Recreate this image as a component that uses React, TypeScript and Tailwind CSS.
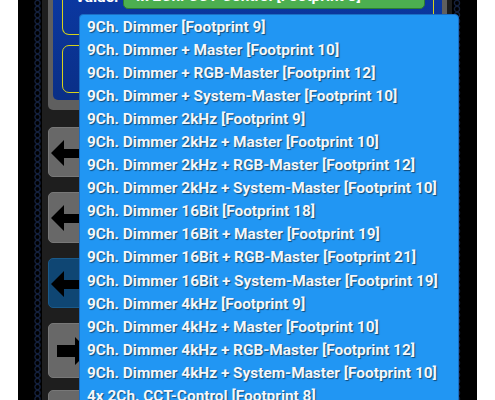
import React from "react";

const items = [
  "9Ch. Dimmer [Footprint 9]",
  "9Ch. Dimmer + Master [Footprint 10]",
  "9Ch. Dimmer + RGB-Master [Footprint 12]",
  "9Ch. Dimmer + System-Master [Footprint 10]",
  "9Ch. Dimmer 2kHz [Footprint 9]",
  "9Ch. Dimmer 2kHz + Master [Footprint 10]",
  "9Ch. Dimmer 2kHz + RGB-Master [Footprint 12]",
  "9Ch. Dimmer 2kHz + System-Master [Footprint 10]",
  "9Ch. Dimmer 16Bit [Footprint 18]",
  "9Ch. Dimmer 16Bit + Master [Footprint 19]",
  "9Ch. Dimmer 16Bit + RGB-Master [Footprint 21]",
  "9Ch. Dimmer 16Bit + System-Master [Footprint 19]",
  "9Ch. Dimmer 4kHz [Footprint 9]",
  "9Ch. Dimmer 4kHz + Master [Footprint 10]",
  "9Ch. Dimmer 4kHz + RGB-Master [Footprint 12]",
  "9Ch. Dimmer 4kHz + System-Master [Footprint 10]",
  "4x 2Ch. CCT-Control [Footprint 8]",
];

function Chain({ w }: { w: number }) {
  return (
    <svg width={w} height={400} className="shrink-0 block">
      <defs>
        <pattern id={"chain" + w} x="0" y="0" width={w} height="6" patternUnits="userSpaceOnUse">
          <circle cx={w / 2} cy="3" r="2.6" fill="none" stroke="#14213f" strokeWidth="1.3" />
        </pattern>
      </defs>
      <rect width={w} height={400} fill={"url(#chain" + w + ")"} />
    </svg>
  );
}

function LeftArrow() {
  return (
    <svg width="60" height="50" viewBox="0 0 60 50" className="block">
      <polygon points="2,25 15,12 15,21 60,21 60,30 15,30 15,38" fill="#000" />
    </svg>
  );
}

function RightArrow() {
  return (
    <svg width="60" height="55" viewBox="0 0 60 55" className="block">
      <polygon points="8,21 26,21 26,13 40,27 26,41 26,33 8,33" fill="#000" />
    </svg>
  );
}

export default function App() {
  return (
    <div className="relative w-[495px] h-[400px] overflow-hidden bg-white font-['Roboto',sans-serif]">
      <div className="ml-[18px] flex h-[400px] w-[459px] overflow-hidden bg-black">
        <div className="w-[15px] shrink-0" />
        <Chain w={9} />
        <div className="flex w-[410px] shrink-0 flex-col bg-[#1e1e1e] pl-[6px] pr-[5px]">
          {/* top settings block */}
          <div className="-mt-[30px] h-[140px] shrink-0 rounded-[5px] bg-[#5f5f5f] px-[5px] pb-[10px]">
            <div className="flex h-full flex-col rounded-b-[5px] bg-gradient-to-b from-[#0b3aa8] to-[#0a2f86] pl-[9px] pr-[8px] pb-[7px]">
              <div className="flex h-[65px] shrink-0 items-end rounded-b-[7px] border-[1.5px] border-t-0 border-[#d6d21a] pb-[25px]">
                <span className="w-[60px] pl-[12px] pb-[4px] text-[15.4px] font-bold leading-none text-white">Value:</span>
                <div className="flex h-[28px] w-[302px] items-end rounded-[5px] border border-[#2e7d32] bg-[#4caf50] pl-[8px] pb-[4px]">
                  <span className="text-[15.4px] font-bold leading-none text-white">4x 2Ch. CCT-Control [Footprint 8]</span>
                </div>
              </div>
              <div className="mt-[10px] flex-1 rounded-[7px] border-[1.5px] border-[#d6d21a]" />
            </div>
          </div>
          <div className="mt-[17px] h-[50px] shrink-0 rounded-[5px] border border-[#787878] bg-[#686868]">
            <LeftArrow />
          </div>
          <div className="mt-[15px] h-[51px] shrink-0 rounded-[5px] border border-[#787878] bg-[#686868]">
            <LeftArrow />
          </div>
          <div className="mt-[15px] h-[50px] shrink-0 rounded-[5px] border border-[#1a5a8a] bg-[#0f4673]">
            <LeftArrow />
          </div>
          <div className="mt-[15px] h-[55px] shrink-0 rounded-[5px] border border-[#787878] bg-[#686868]">
            <RightArrow />
          </div>
          <div className="mt-[12px] h-[55px] shrink-0 rounded-[5px] border border-[#787878] bg-[#686868]" />
        </div>
        <Chain w={10} />
        <div className="w-[15px] shrink-0" />
      </div>

      {/* dropdown menu */}
      <div className="absolute left-[79px] top-[14px] w-[380px] h-[400px] rounded-[4px] border border-[#1b6fc4] bg-[#2196f3] pl-[7px] pt-[0.5px]">
        {items.map((t) => (
          <div
            key={t}
            className="h-[23.1px] whitespace-nowrap text-[15.4px] font-bold leading-[23.1px] text-[#f4f7fb] [text-shadow:1px_1px_1px_rgba(0,0,0,0.5)]"
          >
            {t}
          </div>
        ))}
      </div>
    </div>
  );
}
